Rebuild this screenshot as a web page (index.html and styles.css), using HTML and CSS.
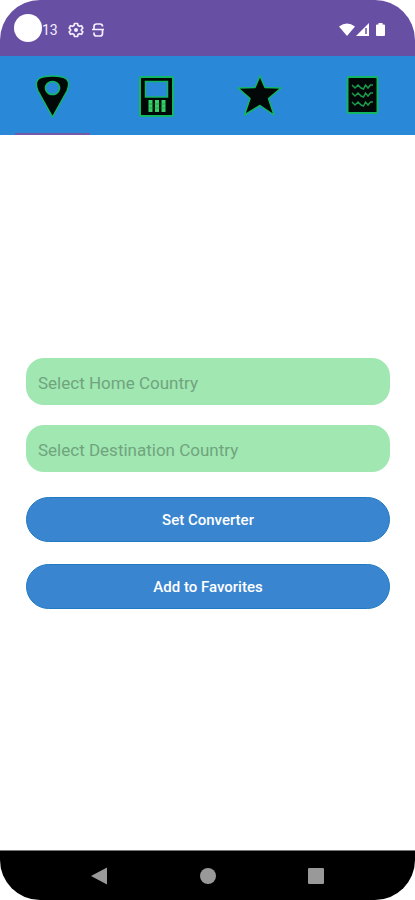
FILE: index.html
```html
<!DOCTYPE html>
<html lang="en">
<head>
<meta charset="utf-8">
<meta name="viewport" content="width=device-width, initial-scale=1">
<title>Converter</title>
<link rel="stylesheet" href="styles.css">
</head>
<body>
<div class="screen">
  <header class="status">
    <div class="status-left">
      <span class="camera"></span>
      <span class="clock">13</span>
      <svg class="gear" width="16" height="16" viewBox="0 0 16 16" aria-hidden="true">
        <path d="M6.500 1.500h3l.5 2 1.500.8 2-.6 1.300 2.500-1.400 1.300v1l1.400 1.300-1.300 2.500-2-.6-1.500.8-.5 2h-3l-.5-2-1.500-.8-2 .6-1.300-2.500 1.400-1.300v-1L1.200 6.200l1.300-2.500 2 .6L6 3.500z" fill="none" stroke="#f4eeff" stroke-width="1.700" stroke-linejoin="round"/>
        <circle cx="8" cy="8" r="2" fill="#f4eeff"/>
      </svg>
      <svg width="12" height="16" viewBox="0 0 12 16" aria-hidden="true">
        <path d="M10.500 4.500Q10.500 2 8 2H4.500Q2 2 2 4.500V7.500h8.500V11.500Q10.500 14 8 14H4.500Q2 14 2 11.500V10.500M0 7.500h12" fill="none" stroke="#f4eeff" stroke-width="1.700"/>
      </svg>
    </div>
    <svg class="signals" width="48" height="16" viewBox="0 0 48 16" aria-hidden="true">
      <path d="M0 4.500Q8-1.500 16 4.500L8 14z" fill="#fff"/>
      <path d="M17 14L30 1v13z" fill="#fff"/>
      <path d="M27 6v6" stroke="#6750a4" stroke-width="1.500"/>
      <path d="M39.500 1h4v1.500H45q1 0 1 1V13q0 1-1 1h-7q-1 0-1-1V3.500q0-1 1-1h1.500z" fill="#fff"/>
    </svg>
  </header>
  <nav class="tabs" aria-label="Sections">
    <button class="tab active" type="button" aria-label="Location">
      <svg width="48" height="48" viewBox="0 0 48 48" aria-hidden="true">
        <path fill-rule="evenodd" d="M24.500 45L10 19Q6.500 11 10.500 7Q14.500 4 24.500 4Q34.500 4 38.500 7Q42.500 11 39 19z M24.500 9.500a7 6.500 0 1 0 .01 0z" fill="#020807" stroke="#12b764" stroke-width="1.500" stroke-linejoin="round"/>
      </svg>
    </button>
    <button class="tab" type="button" aria-label="Converter">
      <svg width="48" height="48" viewBox="0 0 48 48" aria-hidden="true">
        <rect x="8" y="5" width="33" height="39" rx="1.500" fill="#020807" stroke="#12b764" stroke-width="2"/>
        <rect x="13.500" y="9.500" width="22" height="15.500" fill="#2989d8" stroke="#12b764" stroke-width="1.500"/>
        <path d="M18.500 28v12M25 28v12M31.500 28v12" stroke="#35cf67" stroke-width="4"/>
        <path d="M16 32h18M16 36h18" stroke="#087b3d" stroke-opacity=".5" stroke-width="1"/>
      </svg>
    </button>
    <button class="tab" type="button" aria-label="Favorites">
      <svg width="48" height="48" viewBox="0 0 48 48" aria-hidden="true">
        <path d="M25 4L30 15.500 46 16 33.500 26.500 39 43 25 33.500 9.500 43 15 26.500 3 16 20 15.500z" fill="#020807" stroke="#12b764" stroke-width="1.500" stroke-linejoin="round"/>
      </svg>
    </button>
    <button class="tab" type="button" aria-label="Notes">
      <svg width="48" height="48" viewBox="0 0 48 48" aria-hidden="true">
        <rect x="8.500" y="5" width="30" height="36" rx="1.500" fill="#020807" stroke="#12b764" stroke-width="2"/>
        <path d="M13 13l3 3 3-3 3 3 2.500 1 2-4 2.500 3 2.500-3 2.500 0M13 21l3 3 3-3 3 3 2.500 1 2-4 2.500 3 2.500-3 2.500 0M13 30l3 3 3-3 3 3 2.500 1 2-4 2.500 3 2.500-3 2.500 0" fill="none" stroke="#1d994b" stroke-width="1.500"/>
      </svg>
    </button>
  </nav>
  <main class="content">
    <form class="form">
      <input class="field" type="text" placeholder="Select Home Country" aria-label="Home country">
      <input class="field" type="text" placeholder="Select Destination Country" aria-label="Destination country">
      <div class="actions">
        <button class="action" type="button">Set Converter</button>
        <button class="action" type="button">Add to Favorites</button>
      </div>
    </form>
  </main>
  <footer class="system">
    <button class="key" type="button" aria-label="Back">
      <svg width="18" height="18" viewBox="0 0 18 18" aria-hidden="true"><path d="M0 9L16 .5v17z" fill="#999"/></svg>
    </button>
    <button class="key" type="button" aria-label="Home">
      <svg width="18" height="18" viewBox="0 0 18 18" aria-hidden="true"><circle cx="9" cy="9" r="8" fill="#999"/></svg>
    </button>
    <button class="key" type="button" aria-label="Recent apps">
      <svg width="18" height="18" viewBox="0 0 18 18" aria-hidden="true"><rect x="1" y="1" width="16" height="16" rx="1" fill="#999"/></svg>
    </button>
  </footer>
</div>
</body>
</html>
```
FILE: styles.css
```css
* {
  box-sizing: border-box;
}

body {
  margin: 0;
  background: #fff;
  font-family: Roboto, sans-serif;
}

button {
  margin: 0;
  padding: 0;
  border: 0;
  background: none;
  font-family: inherit;
}

svg {
  display: block;
}

.screen {
  display: flex;
  flex-direction: column;
  min-height: 100vh;
  overflow: hidden;
  border-radius: 40px;
}

.status {
  display: flex;
  align-items: center;
  justify-content: space-between;
  height: 56px;
  padding: 4px 28px 0 14px;
  background: #6750a4;
}

.status-left {
  display: flex;
  align-items: center;
}

.camera {
  width: 28px;
  height: 28px;
  margin-bottom: 4px;
  border-radius: 50%;
  background: #fff;
}

.clock {
  color: #f4eeff;
  font-size: 14px;
  line-height: 16px;
}

.gear {
  margin: 0 8px 0 10px;
}

.tabs {
  display: grid;
  grid-template-columns: repeat(4, 1fr);
  height: 79px;
  background: #2989d8;
}

.tab {
  display: flex;
  align-items: center;
  justify-content: center;
  position: relative;
}

.tab.active::after {
  content: "";
  position: absolute;
  right: 14px;
  bottom: 0;
  left: 15px;
  height: 2px;
  background: #7658a8;
}

.content {
  display: flex;
  flex: 1;
  flex-direction: column;
  justify-content: center;
  padding: 0 25px 18px 26px;
}

.form {
  display: flex;
  flex-direction: column;
  gap: 20px;
}

.field {
  width: 100%;
  height: 47px;
  padding: 2px 12px 0;
  border: 0;
  border-radius: 18px;
  background: #a0e7b2;
  color: #24442c;
  font-family: inherit;
  font-size: 17px;
}

.field::placeholder {
  color: #70a47d;
  opacity: 1;
}

.actions {
  display: flex;
  flex-direction: column;
  gap: 22px;
  padding-top: 5px;
}

.action {
  height: 45px;
  border: 1px solid #207bc3;
  border-radius: 23px;
  background: #3a85d0;
  color: #fff;
  font-size: 15px;
  font-weight: 500;
}

.system {
  display: flex;
  align-items: center;
  justify-content: center;
  gap: 90px;
  height: 50px;
  border-top: 1px solid #777;
  background: #000;
}
```
